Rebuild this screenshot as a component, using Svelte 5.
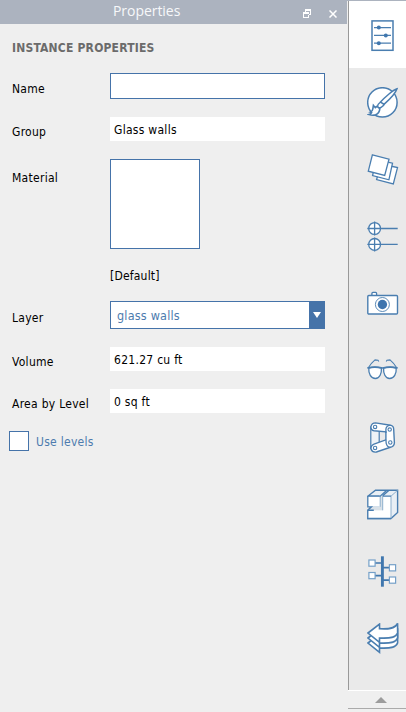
<script>
  const tools = ['properties', 'materials', 'layers', 'levels', 'scenes', 'view', 'links', 'solids', 'tree', 'undo'];
  let active = $state('properties');
  let name = $state('');
  let useLevels = $state(false);
</script>

<div class="app">
  <section class="panel">
    <header>
      <h1>Properties</h1>
      <svg class="float" width="10" height="10" viewBox="0 0 10 10" shape-rendering="crispEdges"><path d="M3 0h6v6H6V5h2V2H4v1H3zM1 3h6v6H1zM2 5v3h4V5z" fill="#fff" fill-rule="evenodd" /></svg>
      <svg class="close" width="8" height="8" viewBox="0 0 8 8"><path d="M.5.5l7 7M7.5.5l-7 7" stroke="#fff" stroke-width="1.5" /></svg>
    </header>
    <div class="body">
      <h2>INSTANCE PROPERTIES</h2>
      <div class="row name"><label for="n">Name</label><input id="n" bind:value={name} /></div>
      <div class="row"><span class="label">Group</span><div class="value">Glass walls</div></div>
      <div class="row material"><span class="label">Material</span><div class="swatch"></div></div>
      <div class="default">[Default]</div>
      <div class="row layer">
        <span class="label">Layer</span>
        <div class="select"><span>glass walls</span><i><svg width="8" height="6" viewBox="0 0 8 6"><path d="M0 0h8L4 6z" fill="#fff" /></svg></i></div>
      </div>
      <div class="row"><span class="label">Volume</span><div class="value">621.27 cu ft</div></div>
      <div class="row"><span class="label">Area by Level</span><div class="value">0 sq ft</div></div>
      <button class="check" onclick={() => (useLevels = !useLevels)}><span class="box">{useLevels ? '✓' : ''}</span><span>Use levels</span></button>
    </div>
  </section>

  <nav>
    {#each tools as tool}
      <button class="tool" class:active={active === tool} aria-label={tool} onclick={() => (active = tool)}>
        <svg width="32" height="32" viewBox="0 0 32 32" fill="none" stroke="#4a7eb0" stroke-width="1.3">
          {#if tool === 'properties'}
            <rect x="5" y=".9" width="21" height="29.4" fill="#fff" stroke-width="1.5" />
            <path d="M7 7.6h17M7 15.4h17M7 23.2h17" />
            <g fill="#4077ae" stroke="none"><circle cx="11.8" cy="7.6" r="2" /><circle cx="18.8" cy="15.4" r="2" /><circle cx="11.8" cy="23.2" r="2" /></g>
          {:else if tool === 'materials'}
            <circle cx="15.4" cy="15.4" r="14.7" fill="#fff" stroke-width="1.5" />
            <path d="M30 1.8C26 3 17.5 10.500 13 15.500c-1.800 1.200-2.600 2.700-2.600 4.300.7 1.300 2.200 1.400 3.700.5 1.600-.8 2.800-2 3.400-3.400C22.500 12.500 28.500 6.500 30 1.800zM13.500 15.200l3.900 2.300" fill="#fff" stroke-width="1.500" />
            <path d="M10 19.300l2.800 2.400c-.2 3-1.700 5.100-4.200 6.100-2 .7-4 .7-6.500-.2 1.200-.3 2-1 2.400-2l-1.200-.4c1.500-.7 2.400-1.800 2.500-3.200l.6-3.700 1.900 2.400z" fill="#fff" stroke-width="1.600" />
          {:else if tool === 'layers'}
            <g fill="#fff"><path d="M14 10l16.500 3.600-4.200 16.300-16.700-4.300z" /><path d="M9 5.500l16.500 3.700-3.600 16.600-16.300-4.200z" /><path d="M5.400.9L22 5.200l-4.300 16.300L1.300 17.200z" /></g>
          {:else if tool === 'levels'}
            {#each [7.5, 23.4] as y}
              <circle cx="7.600" cy={y} r="5.900" fill="#fff" />
              <path d={`M.3 ${y}h30.400M7.600 ${y - 7}v14`} />
            {/each}
          {:else if tool === 'scenes'}
            <path d="M4.900 7.500V5.400q0-1 1-1h2.700q1 0 1 1v2.100" fill="#fff" />
            <rect x=".8" y="7.500" width="29.700" height="18.500" rx="1" fill="#fff" stroke-width="1.400" />
            <circle cx="15.400" cy="16.500" r="7" fill="#fff" stroke-width=".9" />
            <circle cx="15.400" cy="16.500" r="4.700" fill="#3f75ae" stroke="none" />
          {:else if tool === 'view'}
            <path d="M1.800 13.200q6-2 12.600 0c.4 5-1.700 10.300-6 10.300-4.500 0-7-4.800-6.600-10.300zM16.600 13.200q6-2 12.600 0c.4 5.500-2.100 10.300-6.600 10.300-4.300 0-6.400-5.300-6-10.300z" fill="#fff" />
            <path d="M.3 13q7.500-1.600 15.200 0 7.700-1.600 15.200 0" stroke-width="1.700" />
            <path d="M1.500 12.500C3 10 5.500 7 8 4.900l3 .4.800 1.200M29.500 12.500C28 10 25.500 7 23 4.900l-3 .4-.8 1.200" stroke-width="1.100" />
          {:else if tool === 'links'}
            <path d="M3.800 5v21.500h8.400V8z" fill="#eef3f7" stroke-width="1.200" />
            <path d="M8.500.9L23.500 3.200q3.300 1 3.200 4.300l.7 13.300q-.2 3.800-4 4.500L9.400 30Q5.200 30.700 4 27q-.3-3.600 3-4.900l11.900-4.300V9.900L7 8.800Q3.800 8 3.900 4.700 4.800.9 8.500.9z" fill="#fff" stroke-width="1.400" />
            <path d="M18.900 11V7.300q.2-3.600 3.900-4M18.900 17.700l.3 3.600q.9 3.600 4 4" />
            <g stroke-width="1.100"><circle cx="8.100" cy="4.900" r="1.700" /><circle cx="22.700" cy="7.600" r="1.700" /><circle cx="23.300" cy="20.500" r="1.700" /><circle cx="8.100" cy="26" r="1.700" /></g>
          {:else if tool === 'solids'}
            <path d="M.8 7.200L8.500 1.300h22.100v22.200l-6.600 6H.8v-8.200l4-3.500h7V7.200z" fill="#e9eff5" stroke-width="1.400" />
            <path d="M.8 7.200h12.400v10.600H.8zM15.700 7.200H24v22.300H.8v-8.200h14.900z" fill="#fff" stroke="none" />
            <path d="M13.200 7.200h2.500v14.100H.8l3.700-3.500h8.700z" fill="#d9e1e8" stroke="none" />
            <path d="M13.200 7.200v10.600M15.700 7.200v14.100M24 7.200v22.300M24 7.200l6.600-5.900" stroke="#8fb0cd" stroke-width="1" />
            <path d="M.8 7.200v10.600h3.700L.8 21.300v8.200H24M.8 7.200h12.400l6.300-5.700M15.700 7.200H24" stroke-width="1.300" />
            <path d="M15.700 6.800l6-5.300M.8 21.300h6" stroke-width="1.500" />
          {:else if tool === 'tree'}
            <path d="M15.400.3v30.400" stroke-width="2.900" stroke="#4077ae" />
            <path d="M8 7h7M8 19.700h7M15 11.700h7.500M15 24.200h7.500" stroke-width="1.700" stroke="#4077ae" />
            <g fill="#fff" stroke-width="1.200" stroke="#75a0c8"><rect x="1.900" y="4" width="6.200" height="6.200" /><rect x="1.900" y="16.500" width="6.200" height="6.200" /><rect x="22.400" y="8.700" width="6.200" height="6.200" /><rect x="22.400" y="21" width="6.200" height="6.200" /></g>
          {:else}
            {#each [10, 5, 0] as y}
              <path transform={`translate(0 ${y})`} d="M1 10L12.500 1.100v4.700c8 .5 15.500.3 18.100-5.500v9.700c-1.700 4.500-7 5.600-18.100 5v4.400z" fill="#fff" stroke-width="1.600" />
            {/each}
          {/if}
        </svg>
      </button>
    {/each}
    <button class="up" aria-label="Scroll up"><svg width="12" height="6" viewBox="0 0 12 6"><path d="M0 6L6 0l6 6z" fill="#9c9c9c" /></svg></button>
  </nav>
</div>

<style>
  :global(body) { margin: 0; }
  .app { display: flex; width: 406px; height: 712px; box-sizing: border-box; overflow: hidden; background: #efefef; border-top: 1px solid #acb3bf; font: 12px/16px "DejaVu Sans Condensed", "DejaVu Sans", sans-serif; letter-spacing: .28px; color: #000; }
  .panel { width: 348px; flex: none; }
  header { display: flex; align-items: center; width: 347px; height: 23px; background: #acb3bf; }
  h1 { margin: 0 0 0 113px; width: 189px; flex: none; font: 400 14px/20px "Open Sans", sans-serif; letter-spacing: -.05px; color: #f7f8fa; height: 23px; }
  .float { margin: 2px 0 0; }
  .close { margin: 2px 0 0 17px; }
  .body { padding: 16px 0 0 9px; }
  h2 { margin: 0 0 16px 3px; font-size: 12px; line-height: 17px; letter-spacing: .2px; font-weight: bold; color: #6b6b6b; white-space: nowrap; }
  .row { display: flex; height: 24px; margin-bottom: 18px; }
  label, .label { width: 98px; flex: none; margin-left: 3px; padding-top: 7px; white-space: nowrap; }
  .name { height: 26px; }
  label { padding-top: 8px; }
  input { width: 215px; height: 26px; box-sizing: border-box; border: 1px solid #4573a9; background: #fff; padding: 0 4px; outline: 0; }
  .value { width: 215px; box-sizing: border-box; padding: 0 4px; background: #fff; line-height: 26px; }
  .material { height: 90px; }
  .material .label { padding-top: 11px; }
  .swatch { width: 90px; box-sizing: border-box; border: 1px solid #4573a9; background: #fff; }
  .default { margin: 0 0 17px 101px; padding-top: 1px; letter-spacing: .2px; }
  .layer { height: 28px; }
  .layer .label { padding-top: 9px; }
  .select { display: flex; justify-content: space-between; width: 215px; box-sizing: border-box; border: 1px solid #4573a9; background: #fff; color: #4d7bae; font-size: 12.5px; line-height: 27px; letter-spacing: .2px; padding-left: 6px; }
  .select i { display: flex; align-items: center; justify-content: center; width: 15px; background: #4573a9; }
  button { border: 0; margin: 0; padding: 0; background: none; font: inherit; letter-spacing: inherit; }
  .check { display: flex; align-items: center; gap: 7px; color: #4d7bae; }
  .check span:last-child { padding-top: 1px; }
  .box { width: 20px; height: 20px; box-sizing: border-box; border: 1px solid #4573a9; background: #fff; }
  nav { display: flex; flex-direction: column; width: 58px; flex: none; }
  .tool { display: block; height: 67px; flex: none; border-left: 1px solid #999; background: #eaeaea; padding: 0 0 0 18px; text-align: left; }
  .tool.active { background: #fff; }
  .tool svg { display: block; margin-top: 3px; }
  .tool:nth-last-child(2) { height: 86px; padding-bottom: 19px; box-sizing: border-box; }
  .up { display: flex; align-items: center; justify-content: center; height: 19px; flex: none; padding-left: 8px; box-sizing: border-box; border-top: 1px solid #fff; border-bottom: 1px solid #aaa; background: #efefef; }
</style>
